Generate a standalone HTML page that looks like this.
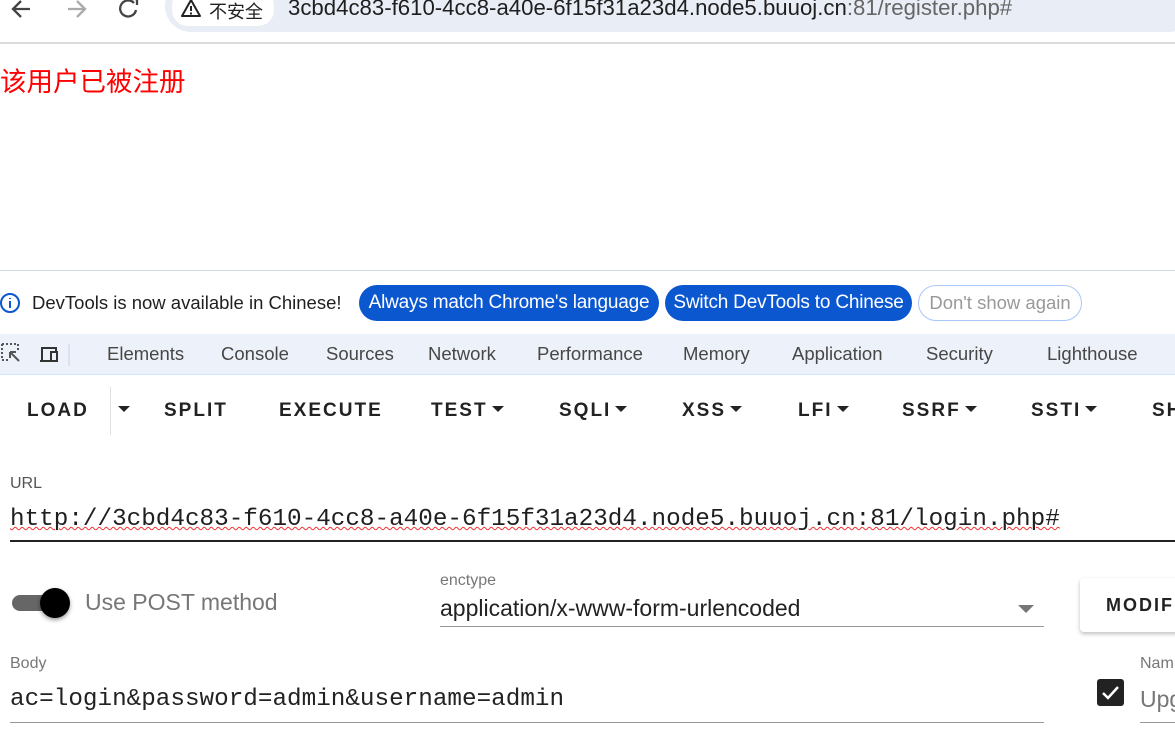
<!DOCTYPE html>
<html><head><meta charset="utf-8"><style>
*{margin:0;padding:0;box-sizing:border-box}
body{width:1175px;height:750px;overflow:hidden;background:#fff;font-family:"Liberation Sans","Noto Sans CJK SC",sans-serif;position:relative;color:#1f1f1f}
.a{position:absolute;white-space:nowrap}
.pill{position:absolute;top:285px;height:36px;border-radius:18px;background:#0b57d0;color:#fff;font-size:19px;line-height:36px;text-align:center;letter-spacing:-0.2px}
.tab{position:absolute;top:343px;font-size:18.5px;color:#474747}
.tb{position:absolute;top:400px;font-size:19px;font-weight:bold;letter-spacing:2px;color:#222}
.ar{display:inline-block;width:0;height:0;border-left:6px solid transparent;border-right:6px solid transparent;border-top:6px solid #222;vertical-align:middle;margin-left:4px;position:relative;top:-2px}
.mono{font-family:"Liberation Mono",monospace;font-size:24.3px}
.lbl{font-size:16px;color:#777}
</style></head><body>
<div class="a" style="left:0;top:42px;width:1175px;height:2px;background:#dcdcdc"></div>
<svg class="a" style="left:6px;top:-3px" width="140" height="26"><path d="M24 12H8M15 4l-8 8 8 8" stroke="#444" stroke-width="2.3" fill="none"/><path d="M62 12h16M71 4l8 8-8 8" stroke="#aaa" stroke-width="2.3" fill="none"/><path d="M128 6a8 8 0 1 0 2 7" stroke="#444" stroke-width="2.3" fill="none"/><path d="M125 2h6v6" stroke="#444" stroke-width="2.3" fill="none"/></svg>
<div class="a" style="left:165px;top:-20px;width:1030px;height:52px;border-radius:26px;background:#e9edf6"></div>
<div class="a" style="left:172px;top:-10px;width:102px;height:36px;border-radius:16px;background:#fff"></div>
<svg class="a" style="left:180px;top:-2px" width="22" height="20"><path d="M11 2L2 18h18z" stroke="#222" stroke-width="2" fill="none" stroke-linejoin="round"/><path d="M11 8v5M11 14.5v2" stroke="#222" stroke-width="2"/></svg>
<div class="a" style="left:209px;top:-2px;font-size:18px;color:#222">不安全</div>
<div class="a" style="left:288px;top:-5px;font-size:22.2px;color:#1f1f1f">3cbd4c83-f610-4cc8-a40e-6f15f31a23d4.node5.buuoj.cn<span style="color:#666">:81/register.php#</span></div>
<div class="a" style="left:0;top:60px;font-size:26.5px;color:#f00">该用户已被注册</div>
<div class="a" style="left:0;top:270px;width:1175px;height:1px;background:#d0d8ea"></div>
<svg class="a" style="left:0;top:292px" width="22" height="22"><circle cx="10" cy="11" r="9" stroke="#0b57d0" stroke-width="2" fill="none"/><path d="M10 9v7M10 6v1" stroke="#0b57d0" stroke-width="2"/></svg>
<div class="a" style="left:32px;top:292px;font-size:18.5px">DevTools is now available in Chinese!</div>
<div class="pill" style="left:359px;width:300px">Always match Chrome's language</div>
<div class="pill" style="left:665px;width:247px">Switch DevTools to Chinese</div>
<div class="a" style="left:918px;top:285px;width:164px;height:36px;border:1px solid #a8c7fa;border-radius:18px;color:#999;font-size:18.5px;line-height:34px;text-align:center">Don't show again</div>
<div class="a" style="left:0;top:334px;width:1175px;height:41px;background:#edf1f9;border-bottom:1px solid #d3e3fd"></div>
<svg class="a" style="left:0;top:342px" width="70" height="24"><path d="M2 2h16v7M2 2v16h7" stroke="#555" stroke-width="2" stroke-dasharray="2 2" fill="none"/><path d="M10 10l9 9M10 10h6M10 10v6" stroke="#555" stroke-width="2" fill="none"/><path d="M42 18V6h14v4M40 19h10" stroke="#333" stroke-width="2" fill="none"/><rect x="51" y="10" width="6" height="9" stroke="#333" stroke-width="2" fill="none"/><path d="M69 2v22" stroke="#c8d4ea" stroke-width="1"/></svg>
<div class="tab" style="left:107px">Elements</div>
<div class="tab" style="left:221px">Console</div>
<div class="tab" style="left:326px">Sources</div>
<div class="tab" style="left:428px">Network</div>
<div class="tab" style="left:537px">Performance</div>
<div class="tab" style="left:683px">Memory</div>
<div class="tab" style="left:792px">Application</div>
<div class="tab" style="left:926px">Security</div>
<div class="tab" style="left:1047px">Lighthouse</div>
<div class="tb" style="left:27px">LOAD</div>
<div class="a" style="left:110px;top:387px;width:1px;height:48px;background:#e0e0e0"></div>
<div class="tb" style="left:114px"><span class="ar"></span></div>
<div class="tb" style="left:164px">SPLIT</div>
<div class="tb" style="left:279px">EXECUTE</div>
<div class="tb" style="left:431px">TEST<span class="ar"></span></div>
<div class="tb" style="left:559px">SQLI<span class="ar"></span></div>
<div class="tb" style="left:682px">XSS<span class="ar"></span></div>
<div class="tb" style="left:798px">LFI<span class="ar"></span></div>
<div class="tb" style="left:902px">SSRF<span class="ar"></span></div>
<div class="tb" style="left:1031px">SSTI<span class="ar"></span></div>
<div class="tb" style="left:1152px">SH</div>
<div class="a lbl" style="left:10px;top:475px;color:#555">URL</div>
<div class="a mono" style="left:10px;top:506px;text-decoration:underline wavy #e33;text-decoration-thickness:1px">http://3cbd4c83-f610-4cc8-a40e-6f15f31a23d4.node5.buuoj.cn:81/login.php#</div>
<div class="a" style="left:10px;top:540px;width:1165px;height:2px;background:#222"></div>
<div class="a" style="left:12px;top:595px;width:46px;height:16px;border-radius:8px;background:#666"></div>
<div class="a" style="left:40px;top:588px;width:30px;height:30px;border-radius:15px;background:#000;box-shadow:0 2px 4px rgba(0,0,0,.4)"></div>
<div class="a" style="left:85px;top:589px;font-size:23px;color:#777">Use POST method</div>
<div class="a lbl" style="left:440px;top:572px">enctype</div>
<div class="a" style="left:440px;top:595px;font-size:23px;color:#222">application/x-www-form-urlencoded</div>
<div class="a" style="left:1018px;top:605px;width:0;height:0;border-left:8px solid transparent;border-right:8px solid transparent;border-top:8px solid #777"></div>
<div class="a" style="left:440px;top:626px;width:604px;height:1px;background:#999"></div>
<div class="a" style="left:1080px;top:578px;width:120px;height:54px;border-radius:4px;background:#fff;box-shadow:0 2px 4px rgba(0,0,0,.25)"></div>
<div class="a" style="left:1106px;top:595px;font-size:18px;font-weight:bold;letter-spacing:2px;color:#222">MODIF</div>
<div class="a lbl" style="left:10px;top:655px">Body</div>
<div class="a mono" style="left:10px;top:686px;color:#222">ac=login&amp;password=admin&amp;username=admin</div>
<div class="a" style="left:10px;top:722px;width:1034px;height:1px;background:#999"></div>
<div class="a lbl" style="left:1140px;top:655px">Nam</div>
<div class="a" style="left:1097px;top:679px;width:27px;height:27px;border-radius:3px;background:#222"></div>
<svg class="a" style="left:1097px;top:679px" width="27" height="27"><path d="M6 14l5 5 10-11" stroke="#fff" stroke-width="2.5" fill="none"/></svg>
<div class="a" style="left:1140px;top:686px;font-size:23px;color:#777">Upg</div>
<div class="a" style="left:1140px;top:722px;width:40px;height:1px;background:#999"></div>
</body></html>
